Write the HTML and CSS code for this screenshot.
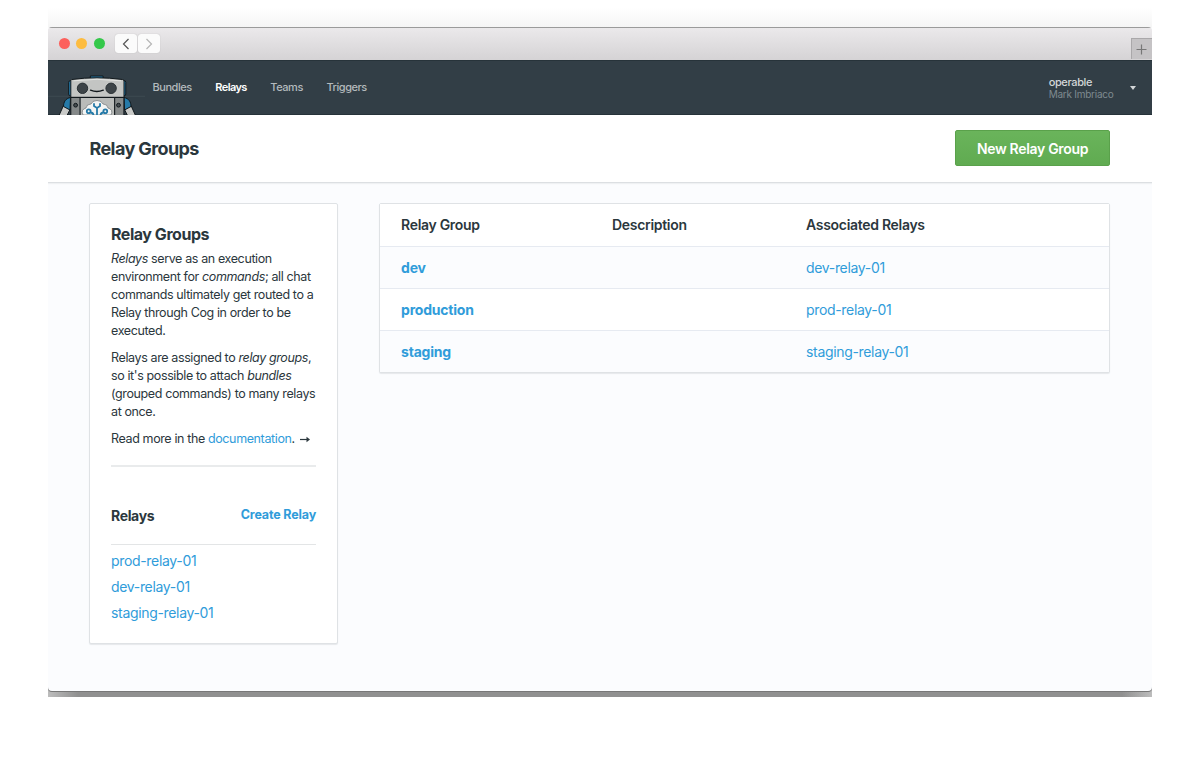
FILE: index.html
```
<!DOCTYPE html>
<html lang="en">
<head>
<meta charset="UTF-8" />
<meta name="viewport" content="width=device-width, initial-scale=1" />
<title>Relay Groups</title>
<link rel="stylesheet" href="styles.css">
</head>
<body>

<div class="stage">
  <div class="window">

    <!-- Browser chrome -->
    <div class="titlebar">
      <span class="light red"></span>
      <span class="light yellow"></span>
      <span class="light green"></span>
      <div class="history">
        <button aria-label="Back">
          <svg width="8" height="12" viewBox="0 0 8 12"><path d="M6.500 1 1.500 6l5 5" /></svg>
        </button>
        <button class="disabled" aria-label="Forward">
          <svg width="8" height="12" viewBox="0 0 8 12"><path d="M1.500 1l5 5-5 5" /></svg>
        </button>
      </div>
      <button class="new-tab" aria-label="New tab">
        <svg width="11" height="11" viewBox="0 0 11 11"><path d="M5.500 .5v10M.5 5.500h10" /></svg>
      </button>
    </div>

    <!-- Navigation -->
    <header class="navbar">
      <svg class="robot" width="98" height="41" viewBox="48 74 98 41">
        <path class="seam" d="M48 96.300h97" />
        <g stroke="#11181c" stroke-width="1" stroke-linejoin="round">
          <!-- arms -->
          <path fill="#c9cac8" d="M63.500 105.500l-4.500 10h8l3-6zM131 105.500l4.500 10h-8l-3-6z" />
          <path fill="#267aa8" d="M70.500 97.500c-5 1-7 4.500-7 9l6.500 3.500zM124 97.500c5 1 7 4.500 7 9l-6.500 3.500z" />
          <!-- ears and cap -->
          <rect fill="#267aa8" x="68.700" y="80.500" width="6" height="15.500" rx="2" />
          <rect fill="#267aa8" x="119.800" y="80.500" width="6" height="15.500" rx="2" />
          <path fill="#267aa8" d="M90.300 78.500v-2.500h12.800v2.500z" />
          <!-- head -->
          <path fill="#c3c5c3" d="M71.800 79.500q25-3.500 50.700 0l1.500 1v16.800H70.800V80.500z" />
          <path fill="none" stroke="#e4e5e2" d="M73.500 80.800q23.500-3 47.500 0" />
          <!-- body -->
          <path fill="#b9bbb9" d="M79.800 97.500h35V116h-35z" />
          <path fill="#858989" d="M70.800 97.500h9.200V116h-9.200zM114.700 97.500h9.200V116h-9.200z" />
          <circle fill="#474e51" cx="75.600" cy="105.200" r="1.900" />
          <circle fill="#474e51" cx="118.500" cy="105.200" r="1.900" />
          <circle fill="#3d4448" stroke="#2a3135" cx="82.500" cy="88.300" r="5.200" />
          <circle fill="#3d4448" stroke="#2a3135" cx="111.100" cy="88.300" r="5.200" />
          <path fill="none" stroke-width="1.400" stroke-linecap="round" d="M90.500 90.200q6.300 2.600 12.800 0" />
        </g>
        <path fill="#f4f5f4" stroke="#5b6265" stroke-width=".6" d="M83 115q-2.500-5.500 3-7 .5-4 5-4 1.500-3.500 6-3.500t6 3.500q4.500 0 5 4 5.500 1.500 3 7z" />
        <g fill="none" stroke="#267aa8" stroke-width="1.800">
          <path d="M94 103.300v2.700l3 2 3-2v-2.700M97 108v7" />
          <path d="M93.500 115q-.5-2.500-3-2.500M100.500 115q.5-2.500 3-2.500" />
          <circle cx="88.700" cy="111.300" r="1.900" />
          <circle cx="105.300" cy="111.300" r="1.900" />
        </g>
      </svg>
      <nav>
        <a>Bundles</a>
        <a class="active">Relays</a>
        <a>Teams</a>
        <a>Triggers</a>
      </nav>
      <div class="account">
        <div>
          <div class="org">operable</div>
          <div class="user">Mark Imbriaco</div>
        </div>
        <span class="caret"></span>
      </div>
    </header>

    <div class="page-header">
      <h1>Relay Groups</h1>
      <button class="btn-primary">New Relay Group</button>
    </div>

    <main>
      <aside class="card sidebar">
        <h2>Relay Groups</h2>
        <p><em>Relays</em> serve as an execution<br>environment for <em>commands</em>; all chat<br>commands ultimately get routed to a<br>Relay through Cog in order to be<br>executed.</p>
        <p>Relays are assigned to <em>relay groups</em>,<br>so it's possible to attach <em>bundles</em><br>(grouped commands) to many relays<br>at once.</p>
        <p>Read more in the <a>documentation</a>. <svg class="arrow" width="10" height="7" viewBox="0 0 10 7"><path d="M0 3.500h7" /><path class="tip" d="M6.500.7 10 3.500 6.500 6.300z" /></svg></p>
        <div class="relays-header">
          <h3>Relays</h3>
          <a>Create Relay</a>
        </div>
        <ul>
          <li><a>prod-relay-01</a></li>
          <li><a>dev-relay-01</a></li>
          <li><a>staging-relay-01</a></li>
        </ul>
      </aside>

      <section class="card groups">
        <div class="row head">
          <span>Relay Group</span><span>Description</span><span>Associated Relays</span>
        </div>
        <div class="row">
          <a class="name">dev</a><span></span><a>dev-relay-01</a>
        </div>
        <div class="row">
          <a class="name">production</a><span></span><a>prod-relay-01</a>
        </div>
        <div class="row">
          <a class="name">staging</a><span></span><a>staging-relay-01</a>
        </div>
      </section>
    </main>

  </div>
</div>

</body>
</html>
```

FILE: styles.css
```
* {
  box-sizing: border-box;
}
body {
  margin: 0;
  background: #fff;
  font-family: Inter, "Liberation Sans", sans-serif;
  color: #2b373d;
}
h1, h2, h3, p, ul {
  margin: 0;
  padding: 0;
}
button {
  border: none;
  padding: 0;
  font-family: inherit;
}
a {
  color: #309cda;
}

/* Window */
.stage {
  width: 1104px;
  height: 697px;
  margin: 0 48px;
  padding-top: 27px;
  overflow: hidden;
  background:
    linear-gradient(90deg, #bdbdbd, #909090 30px, #909090 calc(100% - 30px), #bdbdbd) bottom / 100% 12px no-repeat,
    linear-gradient(#fff 8px, #f5f5f5 27px, transparent 30px);
}
.window {
  height: 664px;
  border-radius: 4px;
  background: #fbfcfe;
  box-shadow: 0 1px 0 #777;
  overflow: hidden;
}
.titlebar {
  display: flex;
  align-items: center;
  height: 33px;
  padding: 0 0 1px 11px;
  border-top: 1px solid #9b9b9b;
  background: linear-gradient(#ebe9eb, #d5d3d5);
}
.light {
  width: 11px;
  height: 11px;
  margin-right: 6.300px;
  border-radius: 50%;
}
.red {
  background: #fc605c;
}
.yellow {
  background: #fdbc40;
}
.green {
  background: #34c84a;
}
.history {
  display: flex;
  gap: 1px;
  margin-left: 4px;
}
.history button {
  width: 22px;
  height: 19px;
  border-radius: 3px;
  background: #fbfbfb;
  box-shadow: 0 0 1px #aaa;
}
.history svg, .new-tab svg {
  display: block;
  margin: auto;
  fill: none;
  stroke: #555;
  stroke-width: 1.2;
}
.history .disabled svg {
  stroke: #b5b5b5;
}
.new-tab {
  align-self: flex-end;
  width: 21px;
  height: 21px;
  margin-left: auto;
  border: 1px solid #aaa8aa;
  border-width: 1px 0 0 1px;
  background: #c5c3c5;
}
.new-tab svg {
  margin-left: 4px;
  stroke: #777;
}

/* Navigation */
.navbar {
  display: flex;
  height: 55px;
  background: #323e46;
  border-top: 1px solid #27333a;
  border-bottom: 1px solid #263239;
}
.robot {
  align-self: flex-end;
  margin-bottom: -1px;
}
.seam {
  stroke: #3d4a51;
  stroke-width: 1;
}
nav {
  display: flex;
  align-items: center;
  gap: 23.600px;
  padding: 0 0 2px 6.500px;
  font-size: 11px;
  font-weight: 500;
  letter-spacing: -0.46px;
}
nav a {
  color: #b4babd;
}
nav .active {
  color: #fff;
  font-weight: 600;
  letter-spacing: -0.6px;
}
.account {
  display: flex;
  align-items: center;
  gap: 16px;
  margin-left: auto;
  padding-right: 16.500px;
  line-height: 12px;
}
.org {
  font-size: 11px;
  font-weight: 500;
  letter-spacing: -0.37px;
  color: #d3d6d8;
}
.user {
  font-size: 10px;
  letter-spacing: -0.25px;
  color: #7f8a90;
}
.caret {
  border: 3.500px solid transparent;
  border-top: 4px solid #d3d6d8;
  border-bottom: 0;
}

/* Page header */
.page-header {
  display: flex;
  align-items: center;
  justify-content: space-between;
  height: 68px;
  padding: 0 42px 1px 41.500px;
  background: #fff;
  border-bottom: 1px solid #dcdfe2;
  box-shadow: 0 1px 1px #eff1f3;
}
h1 {
  font-size: 18px;
  font-weight: 700;
  letter-spacing: -0.6px;
}
.btn-primary {
  width: 155px;
  height: 36px;
  padding-top: 1px;
  border: 1px solid #5aa14b;
  border-radius: 2px;
  background: linear-gradient(#6ab45b, #60ab51);
  color: #fff;
  font-size: 14px;
  font-weight: 600;
  letter-spacing: -0.32px;
}

/* Content */
main {
  display: flex;
  align-items: flex-start;
  gap: 41px;
  padding: 20px 42px 20px 41px;
}
.card {
  background: #fff;
  border: 1px solid #dfe2e5;
  border-radius: 2px;
  box-shadow: 0 1px 1px #e6e8eb;
}
.sidebar {
  width: 249px;
  height: 441px;
  padding: 20px 21px;
  white-space: nowrap;
}
h2 {
  height: 26px;
  line-height: 20px;
  font-size: 16px;
  font-weight: 700;
  letter-spacing: -0.46px;
}
.sidebar p {
  margin-bottom: 9px;
  font-size: 12.500px;
  line-height: 18px;
  letter-spacing: -0.38px;
}
.arrow {
  margin-left: 2px;
  stroke: #2b373d;
  stroke-width: 1.2;
}
.arrow .tip {
  fill: #2b373d;
  stroke: none;
}
.relays-header {
  display: flex;
  justify-content: space-between;
  align-items: center;
  height: 80px;
  margin-top: 17px;
  padding-top: 19px;
  border-top: 2px solid #e9ebec;
  border-bottom: 1px solid #e3e5e6;
}
h3 {
  font-size: 14px;
  font-weight: 700;
  letter-spacing: -0.35px;
}
.relays-header a {
  padding-bottom: 2px;
  font-size: 12.500px;
  font-weight: 700;
  letter-spacing: -0.16px;
}
ul {
  list-style: none;
  padding-top: 3px;
  font-size: 14px;
  line-height: 26px;
  letter-spacing: -0.33px;
}

/* Relay group table */
.groups {
  flex: 1;
  font-size: 14px;
  letter-spacing: -0.33px;
}
.row {
  display: grid;
  grid-template-columns: 211px 194px 1fr;
  align-items: center;
  height: 42px;
  padding-left: 21px;
  background: #fff;
}
.row + .row {
  border-top: 1px solid #e6eaf1;
}
.row:nth-child(even) {
  background: #fbfcfe;
}
.head {
  padding-bottom: 1px;
  font-weight: 600;
  letter-spacing: -0.3px;
}
.name {
  font-weight: 700;
  letter-spacing: -0.2px;
}
```
